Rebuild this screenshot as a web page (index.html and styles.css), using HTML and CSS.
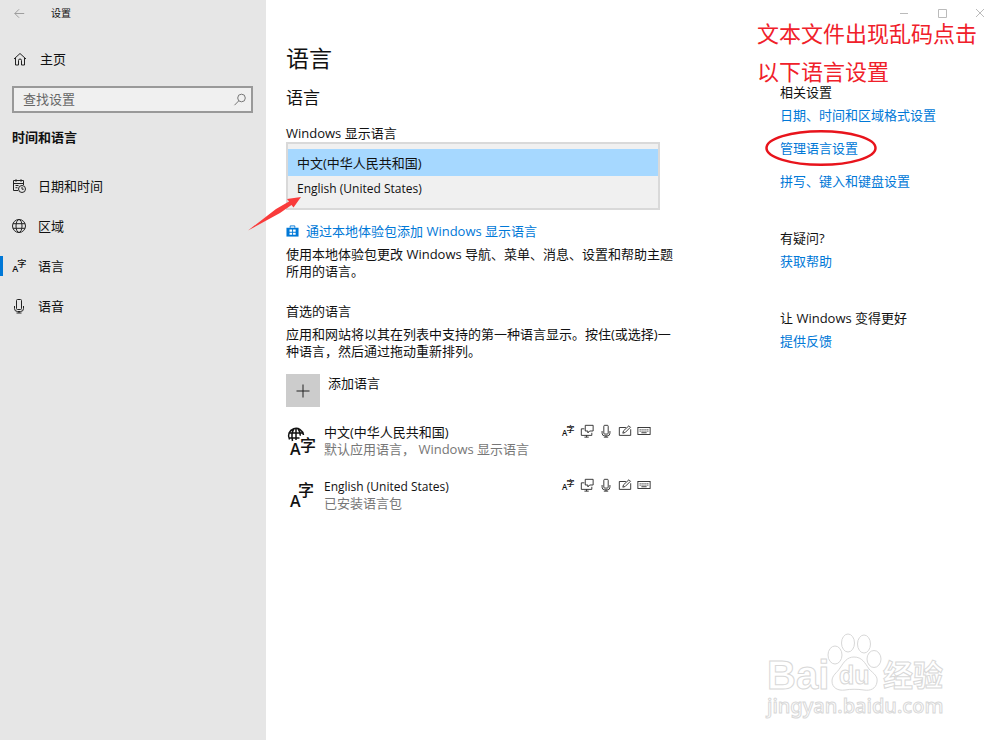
FILE: index.html
```html
<!DOCTYPE html>
<html lang="zh-CN">
<head>
<meta charset="utf-8">
<title>设置</title>
<link rel="stylesheet" href="styles.css">
</head>
<body>
<svg class="sprite" aria-hidden="true">
  <symbol id="i-lang" viewBox="0 0 28 28">
    <text class="glyph-a" x="2" y="24">A</text>
    <text class="glyph-zi" x="11" y="16">字</text>
  </symbol>
  <symbol id="i-globe" viewBox="0 0 16 16">
    <circle cx="8" cy="8" r="6.5"/><ellipse cx="8" cy="8" rx="3" ry="6.5"/><path d="M2 5.7h12M2 10.3h12"/>
  </symbol>
  <symbol id="i-mic" viewBox="0 0 16 16">
    <rect x="5.500" y="1.500" width="5" height="10" rx="1"/><path d="M3.500 8v2.500a3 3 0 0 0 3 3h3a3 3 0 0 0 3-3V8M8 13.500v1.500M5.500 15h5"/>
  </symbol>
  <symbol id="i-display" viewBox="0 0 16 16">
    <path d="M5 5.500H1.500v7.500h12V10M5 15h5M7.500 13v2M6 1.500h9v6.500H11l-2 2.200V8H6z"/>
  </symbol>
  <symbol id="i-pen" viewBox="0 0 16 16">
    <path d="M9 4H1.500v9h13V6M5.500 10.500l.8-2.700L12.500 2l1.700 1.700L8.200 9.700z"/>
  </symbol>
  <symbol id="i-keyboard" viewBox="0 0 16 16">
    <rect x="1" y="4" width="14" height="8"/><path d="M3 6.500h10M3 8.200h10" stroke-dasharray="1.200 1"/><path d="M5 10h6"/>
  </symbol>
</svg>

<div class="window">
  <div class="sidebar">
    <header class="titlebar">
      <button class="back" aria-label="后退"><svg viewBox="0 0 16 16"><path d="M13 8H3M7.500 3.500 3 8l4.500 4.500"/></svg></button>
      <span class="app-name">设置</span>
    </header>
    <a class="home" href="#"><svg class="icon" viewBox="0 0 16 16"><path d="M2 8 8 2.500 14 8M3.500 7v7H6.500V9.500a1.500 1.500 0 0 1 3 0V14h3V7"/></svg>主页</a>
    <form class="search">
      <input type="search" placeholder="查找设置" aria-label="查找设置">
      <svg viewBox="0 0 16 16"><circle cx="9.500" cy="6" r="3.800"/><path d="M6.800 8.800 2.500 13.200"/></svg>
    </form>
    <h2 class="group">时间和语言</h2>
    <nav class="nav">
      <a href="#"><svg class="icon" viewBox="0 0 16 16"><path d="M7 12.500H2.500v-10h10V7M2.500 5.500h10M5 1.200v2.600M10 1.200v2.600M4.500 7.500h3M4.500 9.700h2"/><circle cx="11" cy="11" r="3.500"/><path d="M11 9v2.200h1.700"/></svg>日期和时间</a>
      <a href="#"><svg class="icon"><use href="#i-globe"/></svg>区域</a>
      <a class="current" href="#" aria-current="page"><svg class="icon"><use href="#i-lang"/></svg>语言</a>
      <a href="#"><svg class="icon"><use href="#i-mic"/></svg>语音</a>
    </nav>
  </div>

  <div class="content">
    <div class="controls">
      <button aria-label="最小化"><svg viewBox="0 0 10 10"><path d="M1 5.500h8"/></svg></button>
      <button aria-label="最大化"><svg viewBox="0 0 10 10"><path d="M1.500 1.500h8v8h-8z"/></svg></button>
      <button aria-label="关闭"><svg viewBox="0 0 10 10"><path d="m1 1 8 8M9 1 1 9"/></svg></button>
    </div>
    <div class="columns">
      <main class="main">
        <h1>语言</h1>
        <h2>语言</h2>
        <label for="display-language">Windows 显示语言</label>
        <div class="picker">
          <select id="display-language" size="2">
            <option selected>中文(中华人民共和国)</option>
            <option lang="en">English (United States)</option>
          </select>
          <svg class="arrow" viewBox="0 0 54 36" aria-hidden="true"><path d="M0 34.500 28 13 41 5.500 39 3 53 1 45.500 11.500 43.500 9 32 17z"/></svg>
        </div>
        <a class="store" href="#"><svg viewBox="0 0 14 14"><path class="bag" d="M0.500 3.500h13v9.500h-13z"/><path class="handle" d="M4.500 3.500V1.500h5v2"/><path class="panes" d="M3.800 5.500h2.800v2.300H3.800zM7.600 5.500h2.800v2.300H7.600zM3.800 8.800h2.800v2.300H3.800zM7.600 8.800h2.800v2.300H7.600z"/></svg>通过本地体验包添加 Windows 显示语言</a>
        <p>使用本地体验包更改 Windows 导航、菜单、消息、设置和帮助主题<br>所用的语言。</p>
        <h3>首选的语言</h3>
        <p>应用和网站将以其在列表中支持的第一种语言显示。按住(或选择)一<br>种语言，然后通过拖动重新排列。</p>
        <button class="add"><span class="plus"><svg viewBox="0 0 16 16"><path d="M8 1.500v13M1.500 8h13"/></svg></span>添加语言</button>
        <ul class="languages">
          <li>
            <svg class="lang-icon" viewBox="0 0 30 32"><path d="M3.500 15.500A7.500 7.500 0 1 1 17.500 11M2.500 9h15M2.500 14h11M10 4.500V16M8 4.800C5.500 8 5.500 12 6.500 17M12 4.800c2 2.500 2.300 4.500 2.300 7"/><text class="glyph-a" x="4" y="31">A</text><text class="glyph-zi" x="14" y="27">字</text></svg>
            <div class="lang-text"><span>中文(中华人民共和国)</span><small>默认应用语言， Windows 显示语言</small></div>
            <div class="features"><svg><use href="#i-lang"/></svg><svg><use href="#i-display"/></svg><svg><use href="#i-mic"/></svg><svg><use href="#i-pen"/></svg><svg><use href="#i-keyboard"/></svg></div>
          </li>
          <li>
            <svg class="lang-icon" viewBox="0 0 30 32"><text class="glyph-a" x="4" y="29">A</text><text class="glyph-zi" x="12" y="18">字</text></svg>
            <div class="lang-text"><span lang="en">English (United States)</span><small>已安装语言包</small></div>
            <div class="features"><svg><use href="#i-lang"/></svg><svg><use href="#i-display"/></svg><svg><use href="#i-mic"/></svg><svg><use href="#i-pen"/></svg><svg><use href="#i-keyboard"/></svg></div>
          </li>
        </ul>
      </main>
      <aside class="related">
        <p class="note">文本文件出现乱码点击<br>以下语言设置</p>
        <section>
          <h3>相关设置</h3>
          <a href="#">日期、时间和区域格式设置</a>
          <a class="marked" href="#">管理语言设置<svg viewBox="0 0 112 38" aria-hidden="true"><ellipse cx="56" cy="19" rx="54.500" ry="16.800"/></svg></a>
          <a href="#">拼写、键入和键盘设置</a>
        </section>
        <section>
          <h3>有疑问?</h3>
          <a href="#">获取帮助</a>
        </section>
        <section>
          <h3>让 Windows 变得更好</h3>
          <a href="#">提供反馈</a>
        </section>
      </aside>
    </div>
  </div>
  <svg class="watermark" viewBox="0 0 190 100">
    <text class="wm-bai" x="5" y="64">Bai</text>
    <g class="paw"><ellipse cx="73" cy="30" rx="7" ry="9"/><ellipse cx="86" cy="18" rx="6.500" ry="9"/><ellipse cx="102" cy="19" rx="6.500" ry="9"/><ellipse cx="112" cy="34" rx="7" ry="8.500"/><path d="M92 32c8 0 11 6 15 12 5 5 9 7 8 13-1 7-7 9-13 8-7-1-13-1-19 0-7 1-13-2-13-9 0-6 5-8 8-13 4-6 7-11 14-11z"/></g>
    <text class="wm-du" x="77" y="59">du</text>
    <text class="wm-cn" x="121" y="61">经验</text>
    <text class="wm-url" x="5" y="88">jingyan.baidu.com</text>
  </svg>
</div>
</body>
</html>
```
FILE: styles.css
```css
* { box-sizing: border-box; }
body {
  margin: 0;
  background: #fff;
  color: #111;
  font: 13px/18px "Open Sans", "Noto Sans CJK SC", sans-serif;
}
h1, h2, h3, p, ul { margin: 0; padding: 0; font-weight: 400; }
button, input, select { font: inherit; color: inherit; }
button { padding: 0; border: 0; background: none; }
a { color: #0078d7; text-decoration: none; }
svg { fill: none; stroke: #222; stroke-width: 1; flex: none; }
svg text { fill: #111; stroke: none; }
.sprite { position: absolute; width: 0; height: 0; }
.glyph-a { font: 600 16px "Open Sans", sans-serif; }
.glyph-zi { font: 500 16px "Noto Sans CJK SC", sans-serif; }

.window { position: relative; display: grid; grid-template-columns: 266px minmax(0, 1fr); min-height: 100vh; }

.sidebar { background: #e6e6e6; }
.titlebar { display: flex; align-items: center; gap: 24px; height: 26px; padding-left: 12px; font-size: 10px; }
.back, .back svg { width: 15px; height: 15px; stroke: #999; }
.home, .nav a { display: flex; align-items: center; height: 40px; padding-left: 12px; color: #111; }
.home { gap: 12px; margin-top: 13px; }
.icon { width: 16px; height: 16px; }
.search { position: relative; margin: 7px 13px 0 12px; }
.search input {
  display: block;
  width: 100%;
  height: 27px;
  padding: 0 30px 2px 9px;
  border: 2px solid #999;
  border-radius: 0;
  background: #f0f0f0;
  outline: 0;
  appearance: none;
}
.search input::placeholder { color: #666; }
.search svg { position: absolute; top: 6px; right: 5px; width: 16px; height: 16px; stroke: #777; }
.group { margin: 14px 0 19px 12px; font-size: 13px; line-height: 20px; font-weight: 700; }
.nav a { gap: 11px; padding-left: 11px; }
.nav .current { background: linear-gradient(#0078d7, #0078d7) left center / 3px 20px no-repeat; }

.controls { display: flex; justify-content: flex-end; height: 26px; padding-right: 1px; }
.controls button { width: 38px; }
.controls svg { width: 10px; height: 10px; stroke: #bbb; }
.columns { display: grid; grid-template-columns: minmax(0, 374px) minmax(0, 1fr); gap: 120px; padding: 16px 0 0 20px; }

.main h1 { font-size: 23px; line-height: 32px; }
.main h2 { margin: 12px 0 15px; font-size: 17px; line-height: 24px; }
.main label { display: block; line-height: 17px; }
.picker { position: relative; }
.picker select {
  display: block;
  width: 100%;
  height: 68px;
  padding: 5px 0;
  border: 2px solid #d9d9d9;
  border-radius: 0;
  background: #f0f0f0;
  outline: 0;
  overflow: hidden;
  appearance: none;
}
.picker option { height: 27px; padding: 4px 9px; line-height: 18px; }
.picker option:checked { background: #a6d8ff linear-gradient(#a6d8ff, #a6d8ff); color: #111; }
option:lang(en), .lang-text span:lang(en) { font-size: 12px; }
.arrow { position: absolute; left: -38px; top: 54px; width: 54px; height: 36px; fill: #f93b3b; stroke: none; }
.store { display: flex; align-items: center; gap: 7px; margin: 12px 0 6px; }
.store svg { width: 13px; height: 14px; stroke: none; }
.store .bag { fill: #0078d7; }
.store .handle { stroke: #0078d7; }
.store .panes { fill: #fff; }
.main p { line-height: 17px; white-space: nowrap; }
.main h3 { margin: 22px 0 6px; font-size: 13px; }
.add { display: flex; gap: 8px; margin-top: 14px; }
.plus { display: grid; place-items: center; width: 34px; height: 33px; background: #ccc; }
.plus svg { width: 16px; height: 16px; }
.languages { list-style: none; margin-top: 17px; }
.languages li { display: flex; height: 54px; }
.lang-icon { width: 30px; height: 32px; margin-right: 8px; stroke: #111; stroke-width: 1.5; }
.lang-text { flex: 1; }
.lang-text span, .lang-text small { display: block; font-size: 13px; line-height: 17px; }
.lang-text small { color: #777; }
.features { display: flex; gap: 5px; margin-right: 9px; }
.features svg { width: 14px; height: 14px; }

.related { position: relative; padding-top: 41px; }
.related h3 { margin-bottom: 5px; font-size: 13px; }
.related a { display: block; width: max-content; margin-bottom: 15px; }
.related section { margin-bottom: 39px; }
.related .marked { position: relative; }
.marked svg { position: absolute; left: -15px; top: -10px; width: 112px; height: 38px; stroke: #e8141c; stroke-width: 2.5; }
.note { position: absolute; left: -23px; top: -28px; color: #f0202a; font-size: 22px; line-height: 38px; white-space: nowrap; }

.watermark { position: absolute; right: 48px; bottom: 15px; width: 190px; height: 100px; stroke: #d8d8d8; }
.watermark text { fill: #fff; stroke: #d8d8d8; }
.watermark .paw { fill: #fff; }
.wm-bai { font: 700 40px "Liberation Sans", sans-serif; }
.wm-du { font: 700 25px "Liberation Sans", sans-serif; }
.wm-cn { font: 700 30px "Noto Sans CJK SC", sans-serif; }
.wm-url { font: 500 20px "Noto Sans", sans-serif; }
```
